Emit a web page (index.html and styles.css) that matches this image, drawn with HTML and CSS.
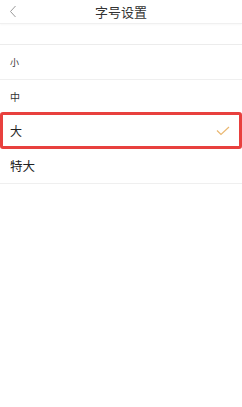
FILE: index.html
```html
<!DOCTYPE html>
<html lang="zh">
<head>
<meta charset="utf-8">
<link rel="stylesheet" href="styles.css">
</head>
<body>
<div class="page">
  <header class="nav">
    <svg class="back" width="8" height="13" viewBox="0 0 8 13"><path d="M6.5 1 L1.5 6.5 L6.5 12" fill="none" stroke="#9a9a9a" stroke-width="1"/></svg>
    <div class="title">字号设置</div>
  </header>
  <div class="gap"></div>
  <ul class="list">
    <li class="row r1"><span class="s1">小</span></li>
    <li class="row r2"><span class="s2">中</span></li>
    <li class="row r3"><span class="s3">大</span>
      <svg class="check" width="14" height="10" viewBox="0 0 14 10"><path d="M1 4.5 L5 8.5 L13 1" fill="none" stroke="#eab872" stroke-width="1.2"/></svg>
      <div class="mark"></div>
    </li>
    <li class="row r4"><span class="s4">特大</span></li>
  </ul>
</div>
</body>
</html>
```
FILE: styles.css
```css
html, body { margin: 0; padding: 0; background: #fff; }
body { font-family: "Noto Sans CJK SC", "Noto Sans", sans-serif; color: #222; }
.page { width: 242px; height: 407px; background: #fff; }
.nav { height: 23px; display: flex; align-items: center; justify-content: center; position: relative; border-bottom: 1px solid #f0f0f0; box-shadow: 0 1px 2px rgba(0,0,0,0.03); }
.back { position: absolute; left: 9px; top: 5px; }
.title { font-size: 13px; color: #333; line-height: 1; }
.gap { height: 20px; background: #fff; border-bottom: 1px solid #ececec; }
.list { list-style: none; margin: 0; padding: 0; }
.row { display: flex; align-items: center; padding-left: 10px; border-bottom: 1px solid #efefef; position: relative; }
.r1 { height: 34px; }
.r2 { height: 33px; }
.r3 { height: 33px; }
.r4 { height: 35px; }
.s1 { font-size: 9px; color: #333; }
.s2 { font-size: 10px; color: #333; }
.s3 { font-size: 12px; color: #222; }
.s4 { font-size: 12.5px; color: #222; }
.check { position: absolute; right: 12px; top: 12px; }
.mark { position: absolute; left: 0; right: 0; top: -2px; bottom: -2px; border: 3px solid #e8403e; border-radius: 3px; }
```
